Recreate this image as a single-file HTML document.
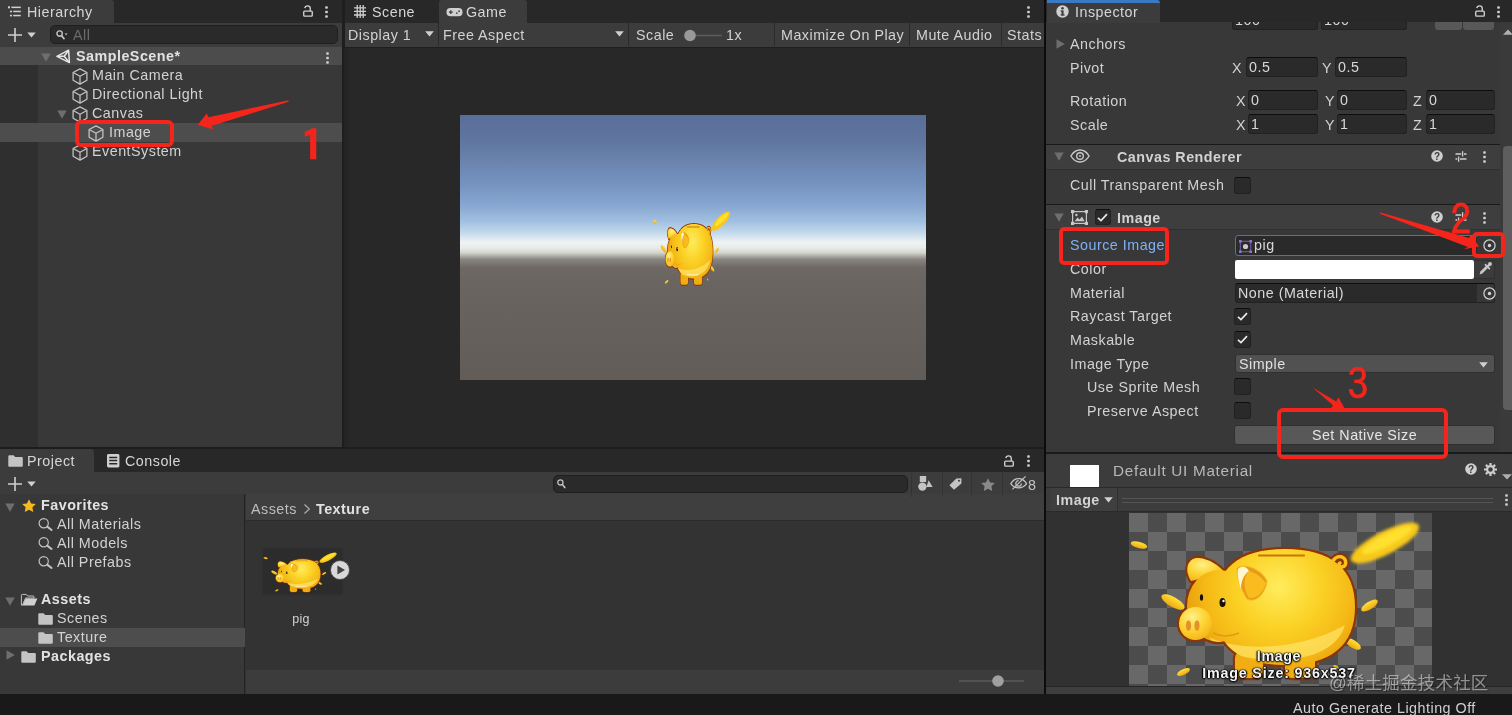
<!DOCTYPE html>
<html lang="en">
<head>
<meta charset="utf-8">
<title>Unity - SampleScene</title>
<style>
*{box-sizing:border-box;margin:0;padding:0}
html,body{width:1512px;height:715px;overflow:hidden;background:#191919}
body{position:relative;font-family:"Liberation Sans","Noto Sans CJK SC",sans-serif;font-size:14.3px;letter-spacing:.5px;color:#d2d2d2;line-height:19px}
.a{position:absolute}
.t{position:absolute;white-space:nowrap;height:19px;line-height:19px;transform:translateY(.5px)}
.b{font-weight:bold;color:#e2e2e2}
.panel{position:absolute;overflow:hidden}
.fld{position:absolute;background:#2a2a2a;border:1px solid #212121;border-top-color:#0d0d0d;border-radius:3px;height:20px;line-height:18px;padding-left:2px;white-space:nowrap;color:#d8d8d8}
.lab{position:absolute;white-space:nowrap;height:20px;line-height:20px;color:#d2d2d2;transform:translateY(.4px)}
.chk{position:absolute;width:17px;height:17px;background:#2a2a2a;border:1px solid #212121;border-top-color:#0d0d0d;border-radius:3px}
.sep{position:absolute;background:#1a1a1a;height:1px}
.vs{position:absolute;width:1px;background:#2a2a2a}
.red{position:absolute;border:4px solid #f5251c;border-radius:4px}
.num{position:absolute;font-family:"IPAGothic","Liberation Sans",sans-serif;color:#f5251c;font-size:40px;line-height:40px;letter-spacing:0;white-space:nowrap}
svg{position:absolute;overflow:visible}
</style>
</head>
<body>
<div id="root" style="position:absolute;left:0;top:0;width:1512px;height:715px;will-change:transform">

<!-- ================= HIERARCHY ================= -->
<div class="panel" id="hier" style="left:0;top:0;width:342px;height:447px;background:#383838">
  <div class="a" style="left:0;top:0;width:342px;height:22.500px;background:#282828"></div>
  <div class="a" style="left:0;top:0;width:114px;height:23px;background:#3c3c3c;border-radius:0 3px 0 0"></div>
  <div class="a" style="left:0;top:22.500px;width:342px;height:24.500px;background:#3c3c3c"></div>
  <div class="a" style="left:0;top:47px;width:38px;height:400px;background:#2f2f2f"></div>
  <div class="t" style="left:27px;top:2.200px;color:#d6d6d6">Hierarchy</div>
  <!-- search -->
  <div class="a" style="left:50px;top:25px;width:288px;height:19px;background:#2a2a2a;border:1px solid #1f1f1f;border-radius:5px"></div>
  <div class="t" style="left:73px;top:25.300px;color:#6c6c6c">All</div>
  <!-- rows -->
  <div class="a" style="left:0;top:47px;width:342px;height:18px;background:#4c4c4c"></div>
  <div class="a" style="left:0;top:123px;width:342px;height:19px;background:#4d4d4d"></div>
  <div class="t b" style="left:76px;top:46px">SampleScene*</div>
  <div class="t" style="left:92px;top:65px">Main Camera</div>
  <div class="t" style="left:92px;top:84px">Directional Light</div>
  <div class="t" style="left:92px;top:103px">Canvas</div>
  <div class="t" style="left:109px;top:122px">Image</div>
  <div class="t" style="left:92px;top:141px">EventSystem</div>
  <!-- hierarchy icons -->
  <svg style="left:8px;top:6px" width="13" height="11" viewBox="0 0 13 11" fill="#cfcfcf"><rect x="0" y=".3" width="2" height="2"/><rect x="3.4" y=".6" width="9.4" height="1.5"/><rect x="2" y="4.7" width="2" height="1.6"/><rect x="5.2" y="4.7" width="7.6" height="1.5"/><rect x="2" y="8.8" width="2" height="1.6"/><rect x="5.2" y="8.8" width="7.6" height="1.5"/></svg>
  <svg style="left:303px;top:5.200px" width="10" height="12" viewBox="0 0 11 13" fill="none" stroke="#d0d0d0" stroke-width="1.5"><rect x=".8" y="6.6" width="9.4" height="5.6" rx="1"/><path d="M2 3.4C2.2 1.6 3.4.8 5 .8 6.9.8 8 2 8 3.8V6.6"/></svg>
  <svg style="left:325px;top:5.5px" width="3" height="12" viewBox="0 0 3 12" fill="#d0d0d0"><rect x=".2" y=".2" width="2.6" height="2.6" rx=".8"/><rect x=".2" y="4.7" width="2.6" height="2.6" rx=".8"/><rect x=".2" y="9.2" width="2.6" height="2.6" rx=".8"/></svg>
  <svg style="left:8px;top:28px" width="29" height="14" viewBox="0 0 29 14"><path d="M7 0V14M0 7H14" stroke="#d0d0d0" stroke-width="1.6" fill="none"/><path d="M19.3 4.6h8.4L23.5 9.6Z" fill="#d0d0d0"/></svg>
  <svg style="left:56px;top:30px" width="12" height="10" viewBox="0 0 12 10" fill="none" stroke="#c4c4c4"><circle cx="3.6" cy="3.6" r="2.7" stroke-width="1.4"/><path d="M5.6 5.8 8 8.6" stroke-width="1.7" stroke-linecap="round"/><path d="M8.6 3.6h3l-1.5 1.7Z" fill="#c4c4c4" stroke="none"/></svg>
  <svg style="left:40.5px;top:52.5px" width="10" height="9" viewBox="0 0 10 9"><path d="M.3 .5h9.4L5 8.8Z" fill="#6e6e6e"/></svg>
  <svg style="left:56px;top:49px" width="15" height="15" viewBox="0 0 15 15" fill="none" stroke="#e6e6e6" stroke-width="1.5" stroke-linejoin="round" stroke-linecap="round"><path d="M1 7.3 12.6 1.2 13.4 13.6Z"/><path d="M1.4 7.3H8.2M8.2 7.3 12.2 2M8.2 7.3 12.8 13"/></svg>
  <svg style="left:326px;top:51.5px" width="3" height="12" viewBox="0 0 3 12" fill="#d0d0d0"><rect x=".2" y=".2" width="2.6" height="2.6" rx=".8"/><rect x=".2" y="4.7" width="2.6" height="2.6" rx=".8"/><rect x=".2" y="9.2" width="2.6" height="2.6" rx=".8"/></svg>
  <svg style="left:72px;top:67.5px" width="16" height="17" viewBox="0 0 16 17" fill="none" stroke="#c4c4c4" stroke-width="1.25" stroke-linejoin="round"><path d="M8 .9 14.9 4.5V12.3L8 16.1 1.1 12.3V4.5Z"/><path d="M1.1 4.5 8 8.2 14.9 4.5M8 8.2V16.1"/></svg>
  <svg style="left:72px;top:86.5px" width="16" height="17" viewBox="0 0 16 17" fill="none" stroke="#c4c4c4" stroke-width="1.25" stroke-linejoin="round"><path d="M8 .9 14.9 4.5V12.3L8 16.1 1.1 12.3V4.5Z"/><path d="M1.1 4.5 8 8.2 14.9 4.5M8 8.2V16.1"/></svg>
  <svg style="left:57px;top:109.5px" width="10" height="9" viewBox="0 0 10 9"><path d="M.3 .5h9.4L5 8.8Z" fill="#6e6e6e"/></svg>
  <svg style="left:72px;top:105.5px" width="16" height="17" viewBox="0 0 16 17" fill="none" stroke="#c4c4c4" stroke-width="1.25" stroke-linejoin="round"><path d="M8 .9 14.9 4.5V12.3L8 16.1 1.1 12.3V4.5Z"/><path d="M1.1 4.5 8 8.2 14.9 4.5M8 8.2V16.1"/></svg>
  <svg style="left:88px;top:124.5px" width="16" height="17" viewBox="0 0 16 17" fill="none" stroke="#c4c4c4" stroke-width="1.25" stroke-linejoin="round"><path d="M8 .9 14.9 4.5V12.3L8 16.1 1.1 12.3V4.5Z"/><path d="M1.1 4.5 8 8.2 14.9 4.5M8 8.2V16.1"/></svg>
  <svg style="left:72px;top:143.5px" width="16" height="17" viewBox="0 0 16 17" fill="none" stroke="#c4c4c4" stroke-width="1.25" stroke-linejoin="round"><path d="M8 .9 14.9 4.5V12.3L8 16.1 1.1 12.3V4.5Z"/><path d="M1.1 4.5 8 8.2 14.9 4.5M8 8.2V16.1"/></svg>
</div>

<!-- ================= GAME ================= -->
<div class="panel" id="game" style="left:344px;top:0;width:700px;height:447px;background:#282828">
  <div class="a" style="left:95px;top:0;width:88px;height:23px;background:#3c3c3c;border-radius:3px 3px 0 0"></div>
  <div class="a" style="left:0;top:22.500px;width:700px;height:25.500px;background:#3c3c3c;border-bottom:1.500px solid #1f1f1f"></div>
  <div class="t" style="left:28px;top:2.200px;color:#d6d6d6">Scene</div>
  <div class="t" style="left:122px;top:2.200px;color:#d6d6d6">Game</div>
  <div class="t" style="left:4px;top:25px">Display 1</div>
  <div class="t" style="left:99px;top:25px">Free Aspect</div>
  <div class="t" style="left:292px;top:25px">Scale</div>
  <div class="t" style="left:382px;top:25px">1x</div>
  <div class="t" style="left:437px;top:25px">Maximize On Play</div>
  <div class="t" style="left:572px;top:25px">Mute Audio</div>
  <div class="t" style="left:663px;top:25px">Stats</div>
  <!-- game icons -->
  <svg style="left:10px;top:5px" width="12" height="13" viewBox="0 0 12 13" fill="none" stroke="#cfcfcf" stroke-width="1.3"><path d="M3.2 0V13M6.2 0V13M9.2 0V13M0 2.8H12M0 6.4H12M0 10H12"/></svg>
  <svg style="left:102px;top:8.300px" width="17" height="8.500" viewBox="0 0 17 9"><rect x="0" y="0" width="17" height="8.8" rx="4.2" fill="#cfcfcf"/><path d="M2.6 4.4H6.6M4.6 2.4V6.4" stroke="#3c3c3c" stroke-width="1.3"/><circle cx="11" cy="5.4" r=".9" fill="#3c3c3c"/><circle cx="13.4" cy="3.4" r=".9" fill="#3c3c3c"/></svg>
  <svg style="left:683px;top:5.5px" width="3" height="12" viewBox="0 0 3 12" fill="#d0d0d0"><rect x=".2" y=".2" width="2.6" height="2.6" rx=".8"/><rect x=".2" y="4.7" width="2.6" height="2.6" rx=".8"/><rect x=".2" y="9.2" width="2.6" height="2.6" rx=".8"/></svg>
  <svg style="left:81px;top:31px" width="9" height="6" viewBox="0 0 9 6"><path d="M.2 .3h8.6L4.5 5.6Z" fill="#d0d0d0"/></svg>
  <svg style="left:271px;top:31px" width="9" height="6" viewBox="0 0 9 6"><path d="M.2 .3h8.6L4.5 5.6Z" fill="#d0d0d0"/></svg>
  <svg style="left:340px;top:29px" width="40" height="13" viewBox="0 0 40 13"><path d="M6 6.5H38" stroke="#5e5e5e" stroke-width="1.4"/><circle cx="6" cy="6.5" r="5.8" fill="#999"/></svg>
  <div class="vs" style="left:94px;top:23px;height:23px"></div>
  <div class="vs" style="left:284px;top:23px;height:23px"></div>
  <div class="vs" style="left:430px;top:23px;height:23px"></div>
  <div class="vs" style="left:565px;top:23px;height:23px"></div>
  <div class="vs" style="left:657px;top:23px;height:23px"></div>
  <!-- game image -->
  <div class="a" id="gv" style="left:116px;top:115px;width:466px;height:265px;background:linear-gradient(to bottom,#596d9a 0%,#60769f 10%,#7593c0 26%,#87a6d0 34%,#a0bfe0 40%,#c4d9ec 44.5%,#eef3f3 48%,#e9ece8 50%,#d2d4ce 52%,#8a8580 54.5%,#6e6964 57.5%,#6a6560 62%,#615c57 100%)"></div>
<svg style="left:308.200px;top:206.900px;width:81.500px;height:81.500px" viewBox="0 0 303 173" preserveAspectRatio="none">
<defs>
<radialGradient id="pbb" gradientUnits="userSpaceOnUse" cx="150" cy="74" r="92"><stop offset="0" stop-color="#ffec5c"/><stop offset=".45" stop-color="#fbd226"/><stop offset=".8" stop-color="#f5b916"/><stop offset="1" stop-color="#eaa30f"/></radialGradient>
<radialGradient id="phb" cx="40%" cy="30%" r="80%"><stop offset="0" stop-color="#fff08a"/><stop offset=".5" stop-color="#fdd432"/><stop offset="1" stop-color="#f2ae16"/></radialGradient>
<linearGradient id="pcb" x1="0" y1="0" x2="0" y2="1"><stop offset="0" stop-color="#ffe23a"/><stop offset="1" stop-color="#f0a80e"/></linearGradient>
<clipPath id="pkb"><path d="M86 94C86 55.700 109.800 36 156 36 202.200 36 226 55.700 226 94 226 132.300 202.200 152 156 152 109.800 152 86 132.300 86 94Z"/><ellipse cx="90" cy="93" rx="32" ry="36"/></clipPath>
<filter id="pfb" x="-20%" y="-40%" width="140%" height="180%"><feGaussianBlur stdDeviation="1.600"/></filter>
</defs>
<g fill="#f7c41e">
<ellipse cx="10" cy="32" rx="8.500" ry="3.200" transform="rotate(14 10 32)" fill="url(#pcb)"/>
<ellipse cx="44" cy="89" rx="13" ry="5" transform="rotate(30 44 89)" fill="url(#pcb)"/>
<ellipse cx="240.500" cy="92.500" rx="9.500" ry="3.800" transform="rotate(-32 240.500 92.500)" fill="url(#pcb)"/>
<ellipse cx="224" cy="131" rx="9" ry="3.800" transform="rotate(32 224 131)" fill="url(#pcb)"/>
<ellipse cx="54.500" cy="159" rx="7" ry="2.800" transform="rotate(-25 54.500 159)" fill="url(#pcb)"/>
<ellipse cx="207" cy="154" rx="3" ry="1.500" transform="rotate(30 207 154)"/>
<ellipse cx="256" cy="30" rx="38" ry="11.500" transform="rotate(-27.500 256 30)" fill="#f7c81c"/>
<ellipse cx="258" cy="27" rx="28" ry="6" transform="rotate(-27.500 258 27)" fill="#ffe02e"/>
</g>
<g fill="#8a3608" stroke="#8a3608" stroke-width="4.400" stroke-linejoin="round">
<path d="M86 94C86 55.700 109.800 36 156 36 202.200 36 226 55.700 226 94 226 132.300 202.200 152 156 152 109.800 152 86 132.300 86 94Z"/>
<ellipse cx="90" cy="93" rx="32" ry="36"/>
<ellipse cx="66.500" cy="110.500" rx="16.500" ry="16.500"/>
<path d="M62 68C54 55 60 44 70 45 80 46 90 52 96 60Z"/>
<rect x="106" y="138" width="28" height="27" rx="7"/>
<rect x="156" y="138" width="30" height="27" rx="7"/>
<path d="M203 60C200 50 206 42 213 44 218 46 218 53 213 54 210 54 209 51 211 50" fill="none" stroke-width="7.500" stroke-linecap="round"/>
</g>
<path d="M203 60C200 50 206 42 213 44 218 46 218 53 213 54 210 54 209 51 211 50" fill="none" stroke="#f8c21c" stroke-width="3.400" stroke-linecap="round"/>
<rect x="106" y="138" width="28" height="27" rx="7" fill="#f2ac14"/>
<rect x="156" y="138" width="30" height="27" rx="7" fill="#f2ac14"/>
<path d="M62 68C54 55 60 44 70 45 80 46 90 52 96 60Z" fill="url(#phb)"/>
<path d="M86 94C86 55.700 109.800 36 156 36 202.200 36 226 55.700 226 94 226 132.300 202.200 152 156 152 109.800 152 86 132.300 86 94Z" fill="url(#pbb)"/>
<ellipse cx="90" cy="93" rx="32" ry="36" fill="url(#pbb)"/>
<path d="M80 124C106 138 170 139 216 112 208 138 178 147 146 147 114 146 92 140 80 124Z" fill="#ffe66a" opacity=".7" clip-path="url(#pkb)"/>
<ellipse cx="66.500" cy="110.500" rx="16.500" ry="16.500" fill="url(#phb)"/>
<path d="M84 120Q96 126 110 120" fill="none" stroke="#e39a18" stroke-width="1.500"/>
<ellipse cx="59.500" cy="112.500" rx="2.600" ry="5.300" fill="#e2922a"/>
<ellipse cx="68" cy="112.500" rx="2.600" ry="5.300" fill="#e2922a"/>
<ellipse cx="93.500" cy="89.500" rx="3" ry="4.600" fill="#1a0f05"/><circle cx="94.500" cy="88" r="1.200" fill="#fff"/>
<ellipse cx="72.500" cy="84.500" rx="1.600" ry="3.200" fill="#1a0f05"/>
<path d="M131 143.400Q151 146 171 143.400" fill="none" stroke="#fff" stroke-width="2" stroke-linecap="round" opacity=".9"/>
<path d="M130 42.500H175" stroke="#c9740c" stroke-width="2.200" stroke-linecap="round"/>
<path d="M108 55C116 50 132 56 138 68 136 82 126 90 118 86 112 76 108 66 108 55Z" fill="#e89a18" stroke="#f7b81a" stroke-width="1"/>
<path d="M109 56C113 52 118 54 120 58 114 62 112 70 112 76 110 70 108 62 109 56Z" fill="#fff6d0"/>
<path d="M120 58C128 60 134 66 137 70 134 80 128 86 120 85 114 76 114 64 120 58Z" fill="#f9bc1e"/>
</svg>
</div>

<!-- ================= PROJECT ================= -->
<div class="panel" id="proj" style="left:0;top:449px;width:1044px;height:245px;background:#333">
  <div class="a" style="left:0;top:0;width:1044px;height:23px;background:#282828"></div>
  <div class="a" style="left:0;top:0;width:94px;height:23px;background:#3c3c3c;border-radius:0 3px 0 0"></div>
  <div class="a" style="left:0;top:23px;width:1044px;height:22px;background:#3c3c3c"></div>
  <div class="a" style="left:0;top:45px;width:245px;height:200px;background:#383838;border-right:1px solid #232323"></div>
  <div class="a" style="left:246px;top:45px;width:798px;height:27px;background:#3f3f3f;border-bottom:1px solid #2b2b2b"></div>
  <div class="a" style="left:246px;top:221px;width:798px;height:24px;background:#3c3c3c"></div>
  <div class="a" style="left:0;top:179px;width:245px;height:19px;background:#4d4d4d"></div>
  <div class="t" style="left:27px;top:2.200px;color:#d6d6d6">Project</div>
  <div class="t" style="left:125px;top:2.200px;color:#d6d6d6">Console</div>
  <div class="t b" style="left:41px;top:46px">Favorites</div>
  <div class="t" style="left:57px;top:65px">All Materials</div>
  <div class="t" style="left:57px;top:84px">All Models</div>
  <div class="t" style="left:57px;top:103px">All Prefabs</div>
  <div class="t b" style="left:41px;top:140px">Assets</div>
  <div class="t" style="left:57px;top:159px">Scenes</div>
  <div class="t" style="left:57px;top:178px">Texture</div>
  <div class="t b" style="left:41px;top:197px">Packages</div>
  <div class="t" style="left:251px;top:50px;color:#bdbdbd">Assets</div>
  <div class="t b" style="left:316px;top:50px">Texture</div>
  <div class="t" style="left:286px;top:160px;width:30px;text-align:center;font-size:12.500px;letter-spacing:.2px">pig</div>
  <div class="a" style="left:553px;top:26px;width:355px;height:18px;background:#2a2a2a;border:1px solid #1f1f1f;border-radius:5px"></div>
  <div class="vs" style="left:911px;top:23px;height:25px;background:#343434"></div>
  <div class="vs" style="left:941.5px;top:23px;height:25px;background:#343434"></div>
  <div class="vs" style="left:971px;top:23px;height:25px;background:#343434"></div>
  <div class="vs" style="left:1002px;top:23px;height:25px;background:#343434"></div>
  <div class="t" style="left:1028px;top:26px;color:#c4c4c4">8</div>
  <!-- project icons -->
  <svg style="left:7.5px;top:6px" width="15" height="12" viewBox="0 0 15 12"><path d="M.3 1.3Q.3.3 1.3.3H5.6L7.2 2H13.8Q14.8 2 14.8 3V10.8Q14.8 11.8 13.8 11.8H1.3Q.3 11.8.3 10.8Z" fill="#c4c4c4"/></svg>
  <svg style="left:107px;top:5px" width="13" height="14" viewBox="0 0 13 14"><rect x="0" y="0" width="12.4" height="13.4" rx="1.4" fill="#cfcfcf"/><path d="M2.2 3.4H10.2M2.2 6.6H10.2M2.2 9.8H10.2" stroke="#282828" stroke-width="1.5"/></svg>
  <svg style="left:8px;top:28px" width="29" height="14" viewBox="0 0 29 14"><path d="M7 0V14M0 7H14" stroke="#d0d0d0" stroke-width="1.6" fill="none"/><path d="M19.3 4.6h8.4L23.5 9.6Z" fill="#d0d0d0"/></svg>
  <svg style="left:1004.200px;top:5.800px" width="10" height="12" viewBox="0 0 11 13" fill="none" stroke="#d0d0d0" stroke-width="1.5"><rect x=".8" y="6.6" width="9.4" height="5.6" rx="1"/><path d="M2 3.4C2.2 1.6 3.4.8 5 .8 6.9.8 8 2 8 3.8V6.6"/></svg>
  <svg style="left:1026.5px;top:6px" width="3" height="12" viewBox="0 0 3 12" fill="#d0d0d0"><rect x=".2" y=".2" width="2.6" height="2.6" rx=".8"/><rect x=".2" y="4.7" width="2.6" height="2.6" rx=".8"/><rect x=".2" y="9.2" width="2.6" height="2.6" rx=".8"/></svg>
  <svg style="left:5px;top:53.5px" width="10" height="9" viewBox="0 0 10 9"><path d="M.3 .5h9.4L5 8.8Z" fill="#6e6e6e"/></svg>
  <svg style="left:21.5px;top:50px" width="14" height="13" viewBox="0 0 14 13"><path d="M7 .2 9.1 4.5 13.8 5.1 10.4 8.3 11.2 12.9 7 10.7 2.8 12.9 3.6 8.3 .2 5.1 4.9 4.5Z" fill="#f6b91f"/></svg>
  <svg style="left:37.5px;top:68.500px" width="15" height="13" viewBox="0 0 15 13" fill="none" stroke="#c4c4c4"><circle cx="5.7" cy="5.2" r="4.6" stroke-width="1.2"/><path d="M9.2 8.6 13.6 12" stroke-width="2" stroke-linecap="round"/></svg>
  <svg style="left:37.5px;top:87.500px" width="15" height="13" viewBox="0 0 15 13" fill="none" stroke="#c4c4c4"><circle cx="5.7" cy="5.2" r="4.6" stroke-width="1.2"/><path d="M9.2 8.6 13.6 12" stroke-width="2" stroke-linecap="round"/></svg>
  <svg style="left:37.5px;top:106.500px" width="15" height="13" viewBox="0 0 15 13" fill="none" stroke="#c4c4c4"><circle cx="5.7" cy="5.2" r="4.6" stroke-width="1.2"/><path d="M9.2 8.6 13.6 12" stroke-width="2" stroke-linecap="round"/></svg>
  <svg style="left:5px;top:147.5px" width="10" height="9" viewBox="0 0 10 9"><path d="M.3 .5h9.4L5 8.8Z" fill="#6e6e6e"/></svg>
  <svg style="left:21px;top:145px" width="17" height="12" viewBox="0 0 17 12"><path d="M.4 1.3Q.4.4 1.3.4H5.2L6.6 2H12.2Q13 2 13 2.8V4H4.6L1.4 11.2H.4Z" fill="none" stroke="#d0d0d0" stroke-width=".9"/><path d="M4.8 4.6H16.4L13.4 11.6H1.6Z" fill="#d0d0d0"/></svg>
  <svg style="left:37.5px;top:163.5px" width="15" height="12" viewBox="0 0 15 12"><path d="M.3 1.3Q.3.3 1.3.3H5.6L7.2 2H13.8Q14.8 2 14.8 3V10.8Q14.8 11.8 13.8 11.8H1.3Q.3 11.8.3 10.8Z" fill="#c4c4c4"/></svg>
  <svg style="left:37.5px;top:182.5px" width="15" height="12" viewBox="0 0 15 12"><path d="M.3 1.3Q.3.3 1.3.3H5.6L7.2 2H13.8Q14.8 2 14.8 3V10.8Q14.8 11.8 13.8 11.8H1.3Q.3 11.8.3 10.8Z" fill="#c4c4c4"/></svg>
  <svg style="left:5.5px;top:201px" width="9" height="10" viewBox="0 0 9 10"><path d="M.5 .3v9.4L8.8 5Z" fill="#6e6e6e"/></svg>
  <svg style="left:21px;top:201.5px" width="15" height="12" viewBox="0 0 15 12"><path d="M.3 1.3Q.3.3 1.3.3H5.6L7.2 2H13.8Q14.8 2 14.8 3V10.8Q14.8 11.8 13.8 11.8H1.3Q.3 11.8.3 10.8Z" fill="#c4c4c4"/></svg>
  <svg style="left:557px;top:30px" width="9" height="10" viewBox="0 0 9 10" fill="none" stroke="#c4c4c4"><circle cx="3.4" cy="3.4" r="2.6" stroke-width="1.3"/><path d="M5.4 5.6 7.8 8.6" stroke-width="1.6" stroke-linecap="round"/></svg>
  <svg style="left:918px;top:27px" width="15" height="15" viewBox="0 0 15 15" fill="#c4c4c4"><rect x="1.8" y="0" width="6.4" height="6"/><circle cx="4.4" cy="10.6" r="4.2"/><path d="M10.6 4.2 14.6 11H8.4Z"/></svg>
  <svg style="left:949px;top:29px" width="13" height="12" viewBox="0 0 13 12"><path d="M.4 7.2 7.4.6 12.4.2V5.4L5 11.8Z" fill="#c4c4c4"/><circle cx="10" cy="2.8" r="1" fill="#3c3c3c"/></svg>
  <svg style="left:980.5px;top:29px" width="14" height="13" viewBox="0 0 14 13"><path d="M7 .2 9.1 4.5 13.8 5.1 10.4 8.3 11.2 12.9 7 10.7 2.8 12.9 3.6 8.3 .2 5.1 4.9 4.5Z" fill="#8a8a8a"/></svg>
  <svg style="left:1010px;top:27px" width="18" height="14" viewBox="0 0 18 14" fill="none" stroke="#c4c4c4" stroke-width="1.2"><path d="M.8 7.6C3 3.8 6 2.6 8.6 2.6 11.4 2.6 14.4 4 16.6 7.6 14.4 10.6 11.6 11.8 8.6 11.8 6 11.8 3 10.8.8 7.6Z"/><path d="M8.6 4.6A2.8 2.8 0 1 0 11.4 7.4"/><path d="M2.4 13.4 15.6.4"/></svg>
  <svg style="left:958px;top:225px" width="68" height="14" viewBox="0 0 68 14"><path d="M1 7H66" stroke="#5a5a5a" stroke-width="1.3"/><circle cx="40" cy="7" r="5.8" fill="#a0a0a0"/></svg>
  <svg style="left:303px;top:53.500px" width="8" height="12" viewBox="0 0 8 12"><path d="M1.5 1.5 6.3 6 1.5 10.5" fill="none" stroke="#a8a8a8" stroke-width="1.3"/></svg>
<div class="a" style="left:262.500px;top:100.300px;width:79px;height:44.500px;background:#2c2c2c;box-shadow:0 0 2px #2a2a2a"></div>
<svg style="left:263px;top:101px;width:77px;height:44px" viewBox="0 0 303 173" preserveAspectRatio="xMidYMid meet">
<defs>
<radialGradient id="pbc" gradientUnits="userSpaceOnUse" cx="150" cy="74" r="92"><stop offset="0" stop-color="#ffec5c"/><stop offset=".45" stop-color="#fbd226"/><stop offset=".8" stop-color="#f5b916"/><stop offset="1" stop-color="#eaa30f"/></radialGradient>
<radialGradient id="phc" cx="40%" cy="30%" r="80%"><stop offset="0" stop-color="#fff08a"/><stop offset=".5" stop-color="#fdd432"/><stop offset="1" stop-color="#f2ae16"/></radialGradient>
<linearGradient id="pcc" x1="0" y1="0" x2="0" y2="1"><stop offset="0" stop-color="#ffe23a"/><stop offset="1" stop-color="#f0a80e"/></linearGradient>
<clipPath id="pkc"><path d="M86 94C86 55.700 109.800 36 156 36 202.200 36 226 55.700 226 94 226 132.300 202.200 152 156 152 109.800 152 86 132.300 86 94Z"/><ellipse cx="90" cy="93" rx="32" ry="36"/></clipPath>
<filter id="pfc" x="-20%" y="-40%" width="140%" height="180%"><feGaussianBlur stdDeviation="1.600"/></filter>
</defs>
<g fill="#f7c41e">
<ellipse cx="10" cy="32" rx="8.500" ry="3.200" transform="rotate(14 10 32)" fill="url(#pcc)"/>
<ellipse cx="44" cy="89" rx="13" ry="5" transform="rotate(30 44 89)" fill="url(#pcc)"/>
<ellipse cx="240.500" cy="92.500" rx="9.500" ry="3.800" transform="rotate(-32 240.500 92.500)" fill="url(#pcc)"/>
<ellipse cx="224" cy="131" rx="9" ry="3.800" transform="rotate(32 224 131)" fill="url(#pcc)"/>
<ellipse cx="54.500" cy="159" rx="7" ry="2.800" transform="rotate(-25 54.500 159)" fill="url(#pcc)"/>
<ellipse cx="207" cy="154" rx="3" ry="1.500" transform="rotate(30 207 154)"/>
<ellipse cx="256" cy="30" rx="38" ry="11.500" transform="rotate(-27.500 256 30)" fill="#f7c81c"/>
<ellipse cx="258" cy="27" rx="28" ry="6" transform="rotate(-27.500 258 27)" fill="#ffe02e"/>
</g>
<g fill="#8a3608" stroke="#8a3608" stroke-width="4.400" stroke-linejoin="round">
<path d="M86 94C86 55.700 109.800 36 156 36 202.200 36 226 55.700 226 94 226 132.300 202.200 152 156 152 109.800 152 86 132.300 86 94Z"/>
<ellipse cx="90" cy="93" rx="32" ry="36"/>
<ellipse cx="66.500" cy="110.500" rx="16.500" ry="16.500"/>
<path d="M62 68C54 55 60 44 70 45 80 46 90 52 96 60Z"/>
<rect x="106" y="138" width="28" height="27" rx="7"/>
<rect x="156" y="138" width="30" height="27" rx="7"/>
<path d="M203 60C200 50 206 42 213 44 218 46 218 53 213 54 210 54 209 51 211 50" fill="none" stroke-width="7.500" stroke-linecap="round"/>
</g>
<path d="M203 60C200 50 206 42 213 44 218 46 218 53 213 54 210 54 209 51 211 50" fill="none" stroke="#f8c21c" stroke-width="3.400" stroke-linecap="round"/>
<rect x="106" y="138" width="28" height="27" rx="7" fill="#f2ac14"/>
<rect x="156" y="138" width="30" height="27" rx="7" fill="#f2ac14"/>
<path d="M62 68C54 55 60 44 70 45 80 46 90 52 96 60Z" fill="url(#phc)"/>
<path d="M86 94C86 55.700 109.800 36 156 36 202.200 36 226 55.700 226 94 226 132.300 202.200 152 156 152 109.800 152 86 132.300 86 94Z" fill="url(#pbc)"/>
<ellipse cx="90" cy="93" rx="32" ry="36" fill="url(#pbc)"/>
<path d="M80 124C106 138 170 139 216 112 208 138 178 147 146 147 114 146 92 140 80 124Z" fill="#ffe66a" opacity=".7" clip-path="url(#pkc)"/>
<ellipse cx="66.500" cy="110.500" rx="16.500" ry="16.500" fill="url(#phc)"/>
<path d="M84 120Q96 126 110 120" fill="none" stroke="#e39a18" stroke-width="1.500"/>
<ellipse cx="59.500" cy="112.500" rx="2.600" ry="5.300" fill="#e2922a"/>
<ellipse cx="68" cy="112.500" rx="2.600" ry="5.300" fill="#e2922a"/>
<ellipse cx="93.500" cy="89.500" rx="3" ry="4.600" fill="#1a0f05"/><circle cx="94.500" cy="88" r="1.200" fill="#fff"/>
<ellipse cx="72.500" cy="84.500" rx="1.600" ry="3.200" fill="#1a0f05"/>
<path d="M131 143.400Q151 146 171 143.400" fill="none" stroke="#fff" stroke-width="2" stroke-linecap="round" opacity=".9"/>
<path d="M130 42.500H175" stroke="#c9740c" stroke-width="2.200" stroke-linecap="round"/>
<path d="M108 55C116 50 132 56 138 68 136 82 126 90 118 86 112 76 108 66 108 55Z" fill="#e89a18" stroke="#f7b81a" stroke-width="1"/>
<path d="M109 56C113 52 118 54 120 58 114 62 112 70 112 76 110 70 108 62 109 56Z" fill="#fff6d0"/>
<path d="M120 58C128 60 134 66 137 70 134 80 128 86 120 85 114 76 114 64 120 58Z" fill="#f9bc1e"/>
</svg>
<svg style="left:330px;top:111px" width="20" height="20" viewBox="0 0 20 20"><circle cx="10" cy="10" r="9.500" fill="#d8d8d8" stroke="#444" stroke-width=".8"/><path d="M7.400 5.400V14.600L15 10Z" fill="#444"/></svg>
</div>

<!-- ================= INSPECTOR ================= -->
<div class="panel" id="insp" style="left:1046px;top:0;width:466px;height:694px;background:#383838">

  <!-- cut-off top fields -->
  <div class="fld" style="left:186px;top:10px;width:86px;height:20px"></div>
  <div class="fld" style="left:275px;top:10px;width:86px;height:20px"></div>
  <div class="a" style="left:389px;top:16px;width:27px;height:14px;background:#585858;border-radius:0 0 3px 3px"></div>
  <div class="a" style="left:417px;top:16px;width:31px;height:14px;background:#585858;border-radius:0 0 3px 3px"></div>
  <div class="t" style="left:189px;top:10px;color:#d8d8d8">100</div>
  <div class="t" style="left:278px;top:10px;color:#d8d8d8">100</div>
  <div class="a" style="left:0;top:0;width:466px;height:22.400px;background:#282828"></div>
  <div class="a" style="left:1px;top:0;width:113px;height:23px;background:#3c3c3c;border-top:3px solid #3a79c4;border-radius:0 3px 0 0"></div>
  <div class="t" style="left:29px;top:2px;color:#d6d6d6">Inspector</div>

  <!-- RectTransform rows -->
  <div class="lab" style="left:24px;top:34px">Anchors</div>
  <div class="lab" style="left:24px;top:58px">Pivot</div>
  <div class="lab" style="left:186px;top:58px">X</div>
  <div class="fld" style="left:200px;top:57px;width:72px">0.5</div>
  <div class="lab" style="left:276px;top:58px">Y</div>
  <div class="fld" style="left:289px;top:57px;width:72px">0.5</div>

  <div class="lab" style="left:24px;top:91px">Rotation</div>
  <div class="lab" style="left:190px;top:91px">X</div>
  <div class="fld" style="left:202px;top:90px;width:70px">0</div>
  <div class="lab" style="left:279px;top:91px">Y</div>
  <div class="fld" style="left:291px;top:90px;width:70px">0</div>
  <div class="lab" style="left:367px;top:91px">Z</div>
  <div class="fld" style="left:380px;top:90px;width:69px">0</div>

  <div class="lab" style="left:24px;top:115px">Scale</div>
  <div class="lab" style="left:190px;top:115px">X</div>
  <div class="fld" style="left:202px;top:114px;width:70px">1</div>
  <div class="lab" style="left:279px;top:115px">Y</div>
  <div class="fld" style="left:291px;top:114px;width:70px">1</div>
  <div class="lab" style="left:367px;top:115px">Z</div>
  <div class="fld" style="left:380px;top:114px;width:69px">1</div>

  <!-- Canvas Renderer -->
  <div class="a" style="left:0;top:144px;width:454px;height:26px;background:#3e3e3e;border-top:1px solid #1a1a1a;border-bottom:1px solid #303030"></div>
  <div class="lab b" style="left:71px;top:147px">Canvas Renderer</div>
  <div class="lab" style="left:24px;top:175px">Cull Transparent Mesh</div>
  <div class="chk" style="left:188px;top:177px"></div>

  <!-- Image -->
  <div class="a" style="left:0;top:204px;width:454px;height:26px;background:#3e3e3e;border-top:1px solid #1a1a1a;border-bottom:1px solid #303030"></div>
  <div class="chk" style="left:48.500px;top:208.500px;width:16px;height:16px"></div>
  <div class="lab b" style="left:71px;top:208px">Image</div>

  <div class="lab" style="left:24px;top:235px;color:#7fb0f5">Source Image</div>
  <div class="fld" style="left:189px;top:235px;width:243px;height:21px;border:1px solid #3a79bb;padding-left:18px;line-height:19px">pig</div>
  <div class="a" style="left:431px;top:236px;width:19px;height:19px;background:#373737"></div>
  <div class="lab" style="left:24px;top:259px">Color</div>
  <div class="a" style="left:189px;top:260px;width:239px;height:19px;background:#fff;border-radius:2px"></div>
  <div class="a" style="left:428px;top:260px;width:21px;height:19px;background:#3c3c3c;border-radius:0 3px 3px 0;border:1px solid #303030;border-left:0"></div>
  <div class="lab" style="left:24px;top:283px">Material</div>
  <div class="fld" style="left:189px;top:283px;width:260px">None (Material)</div>
  <div class="a" style="left:431px;top:284px;width:17px;height:18px;background:#373737;border-radius:0 2px 2px 0"></div>
  <div class="lab" style="left:24px;top:306px">Raycast Target</div>
  <div class="chk" style="left:188px;top:308px"></div>
  <div class="lab" style="left:24px;top:330px">Maskable</div>
  <div class="chk" style="left:188px;top:331px"></div>
  <div class="lab" style="left:24px;top:354px">Image Type</div>
  <div class="a" style="left:189px;top:354px;width:260px;height:19px;background:#515151;border:1px solid #303030;border-radius:3px"></div>
  <div class="lab" style="left:193px;top:354px;color:#e0e0e0">Simple</div>
  <div class="lab" style="left:41px;top:377px">Use Sprite Mesh</div>
  <div class="chk" style="left:188px;top:378px"></div>
  <div class="lab" style="left:41px;top:401px">Preserve Aspect</div>
  <div class="chk" style="left:188px;top:402px"></div>
  <div class="a" style="left:188px;top:425px;width:261px;height:20px;background:#585858;border:1px solid #303030;border-radius:3px"></div>
  <div class="lab" style="left:188px;top:425px;width:261px;text-align:center;color:#e6e6e6">Set Native Size</div>

  <!-- scrollbar -->
  <div class="a" style="left:454px;top:23px;width:12px;height:465px;background:#3a3a3a"></div>
  <div class="a" style="left:456.500px;top:146px;width:9.500px;height:264px;background:#5e5e5e;border-radius:4px 0 0 4px"></div>

  <!-- material header -->
  <div class="a" style="left:0;top:452px;width:466px;height:36px;background:#3c3c3c;border-top:2px solid #1a1a1a"></div>
  <div class="a" style="left:24px;top:465px;width:29px;height:23px;background:#fff"></div>
  <div class="lab" style="left:67px;top:460.500px;font-size:15.300px;letter-spacing:.7px;color:#b8b8b8">Default UI Material</div>

  <!-- preview header -->
  <div class="a" style="left:0;top:487px;width:466px;height:25px;background:#3c3c3c;border-top:1px solid #2a2a2a;border-bottom:1px solid #2a2a2a"></div>
  <div class="a" style="left:5px;top:488px;width:67px;height:23px;background:#3f3f3f;border-right:1px solid #303030"></div>
  <div class="lab b" style="left:10px;top:490px">Image</div>
  <div class="a" style="left:76px;top:498px;width:371px;height:1px;background:#555"></div>
  <div class="a" style="left:76px;top:502px;width:371px;height:1px;background:#555"></div>

  <!-- preview -->
  <div class="a" style="left:0;top:512px;width:466px;height:174px;background:#313131"></div>
  <div class="a" id="checker" style="left:83px;top:513px;width:303px;height:173px;background-color:#4c4c4c;background-image:conic-gradient(#4c4c4c 25%,#686868 0 50%,#4c4c4c 0 75%,#686868 0);background-size:38px 38px;overflow:hidden"></div>
<svg style="left:83px;top:513px;width:303px;height:173px" viewBox="0 0 303 173" preserveAspectRatio="xMidYMid meet">
<defs>
<radialGradient id="pba" gradientUnits="userSpaceOnUse" cx="150" cy="74" r="92"><stop offset="0" stop-color="#ffec5c"/><stop offset=".45" stop-color="#fbd226"/><stop offset=".8" stop-color="#f5b916"/><stop offset="1" stop-color="#eaa30f"/></radialGradient>
<radialGradient id="pha" cx="40%" cy="30%" r="80%"><stop offset="0" stop-color="#fff08a"/><stop offset=".5" stop-color="#fdd432"/><stop offset="1" stop-color="#f2ae16"/></radialGradient>
<linearGradient id="pca" x1="0" y1="0" x2="0" y2="1"><stop offset="0" stop-color="#ffe23a"/><stop offset="1" stop-color="#f0a80e"/></linearGradient>
<clipPath id="pka"><path d="M86 94C86 55.700 109.800 36 156 36 202.200 36 226 55.700 226 94 226 132.300 202.200 152 156 152 109.800 152 86 132.300 86 94Z"/><ellipse cx="90" cy="93" rx="32" ry="36"/></clipPath>
<filter id="pfa" x="-20%" y="-40%" width="140%" height="180%"><feGaussianBlur stdDeviation="1.600"/></filter>
</defs>
<g fill="#f7c41e">
<ellipse cx="10" cy="32" rx="8.500" ry="3.200" transform="rotate(14 10 32)" fill="url(#pca)"/>
<ellipse cx="44" cy="89" rx="13" ry="5" transform="rotate(30 44 89)" fill="url(#pca)"/>
<ellipse cx="240.500" cy="92.500" rx="9.500" ry="3.800" transform="rotate(-32 240.500 92.500)" fill="url(#pca)"/>
<ellipse cx="224" cy="131" rx="9" ry="3.800" transform="rotate(32 224 131)" fill="url(#pca)"/>
<ellipse cx="54.500" cy="159" rx="7" ry="2.800" transform="rotate(-25 54.500 159)" fill="url(#pca)"/>
<ellipse cx="207" cy="154" rx="3" ry="1.500" transform="rotate(30 207 154)"/>
<ellipse cx="256" cy="30" rx="38" ry="11.500" transform="rotate(-27.500 256 30)" fill="#f7c81c" filter="url(#pfa)"/>
<ellipse cx="258" cy="27" rx="28" ry="6" transform="rotate(-27.500 258 27)" fill="#ffe02e" filter="url(#pfa)"/>
</g>
<g fill="#8a3608" stroke="#8a3608" stroke-width="4.400" stroke-linejoin="round">
<path d="M86 94C86 55.700 109.800 36 156 36 202.200 36 226 55.700 226 94 226 132.300 202.200 152 156 152 109.800 152 86 132.300 86 94Z"/>
<ellipse cx="90" cy="93" rx="32" ry="36"/>
<ellipse cx="66.500" cy="110.500" rx="16.500" ry="16.500"/>
<path d="M62 68C54 55 60 44 70 45 80 46 90 52 96 60Z"/>
<rect x="106" y="138" width="28" height="27" rx="7"/>
<rect x="156" y="138" width="30" height="27" rx="7"/>
<path d="M203 60C200 50 206 42 213 44 218 46 218 53 213 54 210 54 209 51 211 50" fill="none" stroke-width="7.500" stroke-linecap="round"/>
</g>
<path d="M203 60C200 50 206 42 213 44 218 46 218 53 213 54 210 54 209 51 211 50" fill="none" stroke="#f8c21c" stroke-width="3.400" stroke-linecap="round"/>
<rect x="106" y="138" width="28" height="27" rx="7" fill="#f2ac14"/>
<rect x="156" y="138" width="30" height="27" rx="7" fill="#f2ac14"/>
<path d="M62 68C54 55 60 44 70 45 80 46 90 52 96 60Z" fill="url(#pha)"/>
<path d="M86 94C86 55.700 109.800 36 156 36 202.200 36 226 55.700 226 94 226 132.300 202.200 152 156 152 109.800 152 86 132.300 86 94Z" fill="url(#pba)"/>
<ellipse cx="90" cy="93" rx="32" ry="36" fill="url(#pba)"/>
<path d="M80 124C106 138 170 139 216 112 208 138 178 147 146 147 114 146 92 140 80 124Z" fill="#ffe66a" opacity=".7" clip-path="url(#pka)"/>
<ellipse cx="66.500" cy="110.500" rx="16.500" ry="16.500" fill="url(#pha)"/>
<path d="M84 120Q96 126 110 120" fill="none" stroke="#e39a18" stroke-width="1.500"/>
<ellipse cx="59.500" cy="112.500" rx="2.600" ry="5.300" fill="#e2922a"/>
<ellipse cx="68" cy="112.500" rx="2.600" ry="5.300" fill="#e2922a"/>
<ellipse cx="93.500" cy="89.500" rx="3" ry="4.600" fill="#1a0f05"/><circle cx="94.500" cy="88" r="1.200" fill="#fff"/>
<ellipse cx="72.500" cy="84.500" rx="1.600" ry="3.200" fill="#1a0f05"/>
<path d="M131 143.400Q151 146 171 143.400" fill="none" stroke="#fff" stroke-width="2" stroke-linecap="round" opacity=".9"/>
<path d="M130 42.500H175" stroke="#c9740c" stroke-width="2.200" stroke-linecap="round"/>
<path d="M108 55C116 50 132 56 138 68 136 82 126 90 118 86 112 76 108 66 108 55Z" fill="#e89a18" stroke="#f7b81a" stroke-width="1"/>
<path d="M109 56C113 52 118 54 120 58 114 62 112 70 112 76 110 70 108 62 109 56Z" fill="#fff6d0"/>
<path d="M120 58C128 60 134 66 137 70 134 80 128 86 120 85 114 76 114 64 120 58Z" fill="#f9bc1e"/>
</svg>
  <div class="t" style="left:133px;top:646px;width:200px;text-align:center;font-weight:bold;color:#f4f4f4;letter-spacing:.6px;text-shadow:0 0 2px #000,0 1px 2px #000,1px 0 1px #000,-1px 0 1px #000">Image</div>
  <div class="t" style="left:133px;top:663px;width:200px;text-align:center;font-weight:bold;color:#f4f4f4;letter-spacing:.8px;text-shadow:0 0 2px #000,0 1px 2px #000,1px 0 1px #000,-1px 0 1px #000">Image Size: 936x537</div>
  <div class="a" style="left:0;top:686px;width:466px;height:8px;background:#3e3e3e;border-top:1px solid #262626"></div>
  <!-- inspector icons -->
  <svg style="left:10px;top:5px" width="13" height="13" viewBox="0 0 13 13"><circle cx="6.5" cy="6.5" r="6.2" fill="#cfcfcf"/><rect x="5.5" y="5.4" width="2.1" height="5" fill="#3c3c3c"/><rect x="4.6" y="5.4" width="2" height="1.2" fill="#3c3c3c"/><rect x="4.6" y="9.4" width="4" height="1.2" fill="#3c3c3c"/><circle cx="6.5" cy="3.3" r="1.25" fill="#3c3c3c"/></svg>
  <svg style="left:428.500px;top:5.200px" width="10" height="12" viewBox="0 0 11 13" fill="none" stroke="#d0d0d0" stroke-width="1.5"><rect x=".8" y="6.6" width="9.4" height="5.6" rx="1"/><path d="M2 3.4C2.2 1.6 3.4.8 5 .8 6.9.8 8 2 8 3.8V6.6"/></svg>
  <svg style="left:451px;top:5.5px" width="3" height="12" viewBox="0 0 3 12" fill="#d0d0d0"><rect x=".2" y=".2" width="2.6" height="2.6" rx=".8"/><rect x=".2" y="4.7" width="2.6" height="2.6" rx=".8"/><rect x=".2" y="9.2" width="2.6" height="2.6" rx=".8"/></svg>
  <svg style="left:9.5px;top:39px" width="9" height="10" viewBox="0 0 9 10"><path d="M.5 .3v9.4L8.8 5Z" fill="#6e6e6e"/></svg>
  <svg style="left:8px;top:152px" width="10" height="9" viewBox="0 0 10 9"><path d="M.3 .5h9.4L5 8.8Z" fill="#6e6e6e"/></svg>
  <svg style="left:8px;top:213px" width="10" height="9" viewBox="0 0 10 9"><path d="M.3 .5h9.4L5 8.8Z" fill="#6e6e6e"/></svg>
  <svg style="left:24px;top:149px" width="20" height="14" viewBox="0 0 20 14" fill="none" stroke="#c8c8c8" stroke-width="1.4"><path d="M.9 7C3.4 2.8 6.6 1 10 1 13.4 1 16.6 2.8 19.1 7 16.6 11.2 13.4 13 10 13 6.6 13 3.4 11.2.9 7Z"/><circle cx="10" cy="7" r="3.3"/><circle cx="10" cy="7" r=".9" fill="#c8c8c8" stroke="none"/></svg>
  <svg style="left:385px;top:150px" width="12" height="12" viewBox="0 0 12 12"><circle cx="6" cy="6" r="5.8" fill="#cfcfcf"/><text x="6" y="9.6" text-anchor="middle" font-family="Liberation Sans,sans-serif" font-weight="bold" font-size="10" letter-spacing="0" fill="#3a3a3a">?</text></svg>
  <svg style="left:409px;top:151px" width="12" height="11" viewBox="0 0 12 11" fill="none" stroke="#cfcfcf" stroke-width="1.3"><path d="M.5 3H6.2M9 3H11.5M7.6 .3V5.4M.5 8H2.2M5 8H11.5M3.6 5.6V10.7"/></svg>
  <svg style="left:437px;top:151px" width="3" height="12" viewBox="0 0 3 12" fill="#d0d0d0"><rect x=".2" y=".2" width="2.6" height="2.6" rx=".8"/><rect x=".2" y="4.7" width="2.6" height="2.6" rx=".8"/><rect x=".2" y="9.2" width="2.6" height="2.6" rx=".8"/></svg>
  <svg style="left:385px;top:211px" width="12" height="12" viewBox="0 0 12 12"><circle cx="6" cy="6" r="5.8" fill="#cfcfcf"/><text x="6" y="9.6" text-anchor="middle" font-family="Liberation Sans,sans-serif" font-weight="bold" font-size="10" letter-spacing="0" fill="#3a3a3a">?</text></svg>
  <svg style="left:409px;top:212px" width="12" height="11" viewBox="0 0 12 11" fill="none" stroke="#cfcfcf" stroke-width="1.3"><path d="M.5 3H6.2M9 3H11.5M7.6 .3V5.4M.5 8H2.2M5 8H11.5M3.6 5.6V10.7"/></svg>
  <svg style="left:437px;top:212px" width="3" height="12" viewBox="0 0 3 12" fill="#d0d0d0"><rect x=".2" y=".2" width="2.6" height="2.6" rx=".8"/><rect x=".2" y="4.7" width="2.6" height="2.6" rx=".8"/><rect x=".2" y="9.2" width="2.6" height="2.6" rx=".8"/></svg>
  <svg style="left:25px;top:210px" width="17" height="15" viewBox="0 0 17 15"><rect x="1.6" y="1.6" width="13.8" height="11.8" fill="none" stroke="#c8c8c8" stroke-width="1.2"/><path d="M3.6 11.2 6.6 7.6 8.6 9.6 11 6.4 13.6 11.2Z" fill="#c8c8c8"/><circle cx="5.4" cy="5" r="1.2" fill="#c8c8c8"/><rect x="0" y="0" width="3.2" height="3.2" fill="#c8c8c8"/><rect x="13.8" y="0" width="3.2" height="3.2" fill="#c8c8c8"/><rect x="0" y="11.8" width="3.2" height="3.2" fill="#c8c8c8"/><rect x="13.8" y="11.8" width="3.2" height="3.2" fill="#c8c8c8"/></svg>
  <svg style="left:51px;top:213px" width="11" height="9" viewBox="0 0 11 9"><path d="M1 4.8 4 7.6 10 1.2" fill="none" stroke="#e8e8e8" stroke-width="1.7"/></svg>
  <svg style="left:191px;top:312px" width="11" height="9" viewBox="0 0 11 9"><path d="M1 4.8 4 7.6 10 1.2" fill="none" stroke="#e8e8e8" stroke-width="1.7"/></svg>
  <svg style="left:191px;top:335px" width="11" height="9" viewBox="0 0 11 9"><path d="M1 4.8 4 7.6 10 1.2" fill="none" stroke="#e8e8e8" stroke-width="1.7"/></svg>
  <svg style="left:193px;top:240px" width="13" height="13" viewBox="0 0 13 13"><rect x="1.3" y="1.3" width="10.4" height="10.4" fill="none" stroke="#7a5fae" stroke-width="1"/><circle cx="6.5" cy="6.5" r="2.6" fill="#c8c8c8"/><rect x="0" y="0" width="2.6" height="2.6" fill="#8f74c6"/><rect x="10.4" y="0" width="2.6" height="2.6" fill="#8f74c6"/><rect x="0" y="10.4" width="2.6" height="2.6" fill="#8f74c6"/><rect x="10.4" y="10.4" width="2.6" height="2.6" fill="#8f74c6"/></svg>
  <svg style="left:436.5px;top:239px" width="13" height="13" viewBox="0 0 13 13"><circle cx="6.5" cy="6.5" r="5.6" fill="none" stroke="#d6d6d6" stroke-width="1.2"/><circle cx="6.5" cy="6.5" r="1.7" fill="#d6d6d6"/></svg>
  <svg style="left:436.5px;top:286.5px" width="13" height="13" viewBox="0 0 13 13"><circle cx="6.5" cy="6.5" r="5.6" fill="none" stroke="#d6d6d6" stroke-width="1.2"/><circle cx="6.5" cy="6.5" r="1.7" fill="#d6d6d6"/></svg>
  <svg style="left:433px;top:262px" width="13" height="13" viewBox="0 0 13 13"><path d="M.6 12.4 1.4 9.6 7.4 3.6 9.4 5.6 3.4 11.6Z" fill="#c8c8c8"/><path d="M6.4 2.6 10.4 6.6" stroke="#c8c8c8" stroke-width="1.6" stroke-linecap="round"/><path d="M8.6 4.4 10.4 2.6" stroke="#c8c8c8" stroke-width="2.2"/><circle cx="11" cy="2" r="1.9" fill="#c8c8c8"/></svg>
  <svg style="left:433px;top:361.5px" width="9" height="6" viewBox="0 0 9 6"><path d="M.2 .3h8.6L4.5 5.6Z" fill="#d0d0d0"/></svg>
  <svg style="left:419px;top:463px" width="12" height="12" viewBox="0 0 12 12"><circle cx="6" cy="6" r="5.8" fill="#cfcfcf"/><text x="6" y="9.6" text-anchor="middle" font-family="Liberation Sans,sans-serif" font-weight="bold" font-size="10" letter-spacing="0" fill="#3a3a3a">?</text></svg>
  <svg style="left:438px;top:463px" width="13" height="13" viewBox="0 0 13 13"><circle cx="6.5" cy="6.5" r="3.4" fill="none" stroke="#cfcfcf" stroke-width="2.2"/><path d="M6.5 0V13M0 6.5H13M1.9 1.9 11.1 11.1M11.1 1.9 1.9 11.1" stroke="#cfcfcf" stroke-width="2.2" stroke-dasharray="2.2 8.6 2.2 0"/></svg>
  <svg style="left:58px;top:497px" width="9" height="6" viewBox="0 0 9 6"><path d="M.2 .3h8.6L4.5 5.6Z" fill="#d0d0d0"/></svg>
  <svg style="left:459px;top:494px" width="3" height="12" viewBox="0 0 3 12" fill="#d0d0d0"><rect x=".2" y=".2" width="2.6" height="2.6" rx=".8"/><rect x=".2" y="4.7" width="2.6" height="2.6" rx=".8"/><rect x=".2" y="9.2" width="2.6" height="2.6" rx=".8"/></svg>
  <svg style="left:457px;top:29px" width="10" height="6" viewBox="0 0 10 6"><path d="M0 5.8 5 .4 10 5.8Z" fill="#b0b0b0"/></svg>
  <svg style="left:456px;top:474px" width="10" height="6" viewBox="0 0 10 6"><path d="M0 .2 5 5.6 10 .2Z" fill="#b0b0b0"/></svg>
</div>

<!-- status bar -->
<div class="a" style="left:0;top:694px;width:1512px;height:21px;background:#191919"></div>
<div class="t" style="left:1293px;top:698px;color:#d0d0d0">Auto Generate Lighting Off</div>

<!-- dividers -->
<div class="a" style="left:342px;top:0;width:2.500px;height:447px;background:#1e1e1e"></div>
<div class="a" style="left:344px;top:48px;width:6px;height:399px;background:linear-gradient(to right,#232323,#262626 80%,#282828)"></div>
<div class="a" style="left:1044px;top:0;width:2px;height:694px;background:#0c0c0c"></div>
<div class="a" style="left:0;top:447px;width:1044px;height:2px;background:#1d1d1d"></div>

<!-- ================= ANNOTATIONS ================= -->
<div class="red" style="left:75px;top:119.600px;width:99.400px;height:27px;border-radius:6px"></div>
<div class="red" style="left:1059px;top:226.800px;width:110px;height:38.600px;border-radius:5px"></div>
<div class="red" style="left:1471.500px;top:232px;width:33.700px;height:26.200px;border-radius:5px"></div>
<div class="red" style="left:1276.500px;top:407.500px;width:171px;height:51px;border-radius:6px"></div>
<svg style="left:0;top:0" width="1512" height="715" viewBox="0 0 1512 715" fill="#f5251c">
<path d="M288.500 100.300 208.600 117.200 206.700 113.600 197.800 124.800 213.200 129.400 211.300 126 288.600 101.800Z"/>
<path d="M1379.600 212.200 1468.900 238 1470.900 234.500 1479 246.600 1463.800 249.200 1468 246.900 1380.400 213.900Z"/>
<path d="M1312.500 387.600 1336.200 401.600 1338.400 397.200 1345 409 1330.500 409 1333 405.200Z"/>
</svg>
<div class="num" style="left:301.500px;top:124px;font-size:41.500px;line-height:42px;transform:scaleX(1.25);transform-origin:50% 50%;-webkit-text-stroke:1.5px #f5251c">1</div>
<div class="num" style="left:1450.500px;top:198px;font-size:41.500px;line-height:42px;-webkit-text-stroke:.8px #f5251c">2</div>
<div class="num" style="left:1347.500px;top:362px;font-size:41.500px;line-height:42px;-webkit-text-stroke:.7px #f5251c">3</div>
<div class="t" style="left:1329px;top:673px;font-size:17.500px;letter-spacing:.2px;color:rgba(255,255,255,.48);text-shadow:1px 1px 1px rgba(0,0,0,.35)">@稀土掘金技术社区</div>

</div>
</body>
</html>
